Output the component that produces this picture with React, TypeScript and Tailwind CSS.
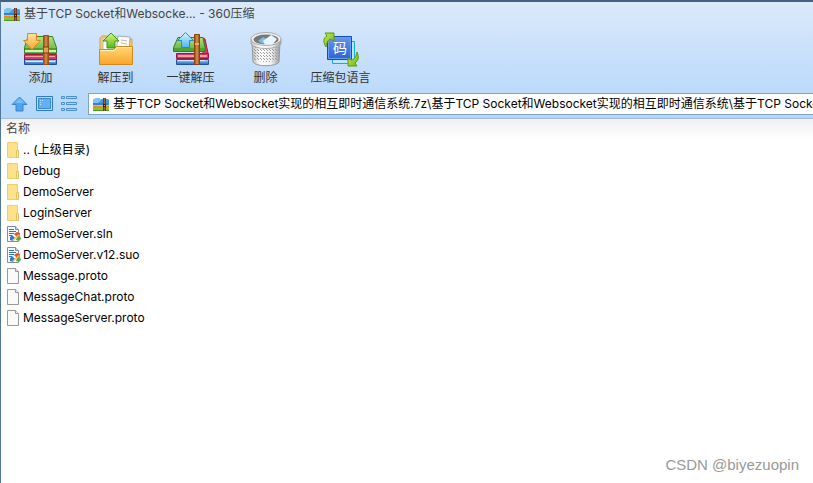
import type { ReactNode } from 'react'

const ARCHIVE_PATH =
  '基于TCP Socket和Websocket实现的相互即时通信系统.7z\\基于TCP Socket和Websocket实现的相互即时通信系统\\基于TCP Socket和Websocket实现的相互即时通信系统'

type FileKind = 'folder' | 'solution' | 'file'

const files: { name: string; kind: FileKind }[] = [
  { name: '.. (上级目录)', kind: 'folder' },
  { name: 'Debug', kind: 'folder' },
  { name: 'DemoServer', kind: 'folder' },
  { name: 'LoginServer', kind: 'folder' },
  { name: 'DemoServer.sln', kind: 'solution' },
  { name: 'DemoServer.v12.suo', kind: 'solution' },
  { name: 'Message.proto', kind: 'file' },
  { name: 'MessageChat.proto', kind: 'file' },
  { name: 'MessageServer.proto', kind: 'file' },
]

function ArchiveIcon() {
  return (
    <svg className="h-4 w-4 shrink-0" viewBox="0 0 16 16" aria-hidden="true">
      <path d="M0 3h2V2h5v1h8l1 1v5H0z" fill="#3f9fe0" />
      <path d="M0 3h2V2h5v1h2L5 7H0z" fill="#7cc6f2" />
      <path d="M0 7h16v2H0z" fill="#2a86d2" />
      <path d="M0 9h16v3H0z" fill="#f08a1d" />
      <path d="M0 9h16v1H0z" fill="#ffb347" />
      <path d="M0 12h16v2H0z" fill="#86c23a" />
      <path d="M0 14h16v1H0z" fill="#4f9a1e" />
      <path d="M10 2h3v13h-3z" fill="#6b3a20" />
      <path d="M11 2h1v13h-1z" fill="#a0623a" />
      <path d="M10 8h3v3h-3z" fill="#42210f" />
      <path d="M11 9h1v1h-1z" fill="#e0a45b" />
    </svg>
  )
}

function BooksIcon({ extract = false }: { extract?: boolean }) {
  return (
    <svg className="h-10 w-10" viewBox="0 0 40 40" aria-hidden="true">
      <defs>
        <linearGradient id="bookGreen" x2="0" y2="1">
          <stop stopColor="#b4e283" />
          <stop offset="1" stopColor="#56ad36" />
        </linearGradient>
        <linearGradient id="bookBlue" x2="0" y2="1">
          <stop stopColor="#a9dcff" />
          <stop offset="1" stopColor="#245fc0" />
        </linearGradient>
        <linearGradient id="strap">
          <stop stopColor="#8b4313" />
          <stop offset=".5" stopColor="#dd944b" />
          <stop offset="1" stopColor="#8b4313" />
        </linearGradient>
        <linearGradient id="arrowGold" x2="0" y2="1">
          <stop stopColor="#ffe3a1" />
          <stop offset="1" stopColor="#ffa62e" />
        </linearGradient>
        <linearGradient id="arrowBlue" x2="0" y2="1">
          <stop stopColor="#d6f7ff" />
          <stop offset="1" stopColor="#4eb1ff" />
        </linearGradient>
      </defs>
      {extract ? (
        <>
          <path d="M5.500 30.500h32v5h-32z" fill="url(#bookBlue)" stroke="#2451a5" />
          <path d="M7 31h27v1H7z" fill="#c7ecff" />
          <path d="M5.500 24.500h32v5h-32z" fill="#cf3f63" stroke="#98173c" />
          <path d="M7 26h29v2H7z" fill="#ee9db0" />
          <path d="m32 9 2 1 3 14-5 1z" fill="#d93e61" stroke="#a91942" />
          <path d="M7 8.500h25l2 10v4H2.500v-4z" fill="url(#bookGreen)" stroke="#327f19" />
          <path d="M3 19h30v3H3z" fill="#4da52a" />
          <path d="M23.500 5.500h5v30h-5z" fill="url(#strap)" stroke="#8a4210" />
          <path d="M24 14h4v2h-4z" fill="#ecaa64" />
          <path d="M14.500 3.500 22.500 11.500h-4v7h-8v-7h-4z" fill="url(#arrowBlue)" stroke="#2389d9" />
        </>
      ) : (
        <>
          <path d="M3.500 30.500h32v5h-32z" fill="url(#bookBlue)" stroke="#254d9f" />
          <path d="M5 32h29v1H5z" fill="#d5eeff" />
          <path d="M3.500 25.500h32v5h-32z" fill="#cf3f68" stroke="#9a183e" />
          <path d="M4 27h30v1H4z" fill="#f3a0b7" />
          <path d="M7 7.500h24.500l4 11v6h-32v-6z" fill="url(#bookGreen)" stroke="#3a8020" />
          <path d="M4 19h31v2H4z" fill="#49a12c" />
          <path d="M4 21h31v2H4z" fill="#d3efbb" />
          <path d="M22.500 6.500h5v29h-5z" fill="url(#strap)" stroke="#9a5218" />
          <path d="M23 18h4v6h-4z" fill="#e0a05c" />
          <path d="M22 18h6M22 24h6" stroke="#7c3a10" />
          <path d="M6.500 4.500h9v7h4l-8.500 9-8.500-9h4z" fill="url(#arrowGold)" stroke="#d98a20" />
        </>
      )}
    </svg>
  )
}

function ExtractToIcon() {
  return (
    <svg className="h-10 w-10" viewBox="0 0 40 40" aria-hidden="true">
      <defs>
        <linearGradient id="folderFront" x2="0" y2="1">
          <stop stopColor="#ffd87b" />
          <stop offset="1" stopColor="#f9a526" />
        </linearGradient>
        <linearGradient id="arrowGreen" x2="0" y2="1">
          <stop stopColor="#d8f884" />
          <stop offset="1" stopColor="#50b819" />
        </linearGradient>
      </defs>
      <path d="M4 34V9l2-2h9l2 3h19v24z" fill="#f1cb76" stroke="#d5a24b" />
      <path d="m7 9 14-2 1 15H7z" fill="#fff" stroke="#b8b8b8" />
      <path d="m22 7 12 1-1 15H20z" fill="#fafafa" stroke="#aaa" />
      <path d="m25 11 6 1m-6 2 6 1" stroke="#bbb" />
      <path d="M3.500 20.500h14l3-3h16v18h-33z" fill="url(#folderFront)" stroke="#d9871b" />
      <path d="M4 21.500h14l3-3h15" fill="none" stroke="#fff0b9" />
      <path d="m15 4 8 8h-4v7h-8v-7H7z" fill="url(#arrowGreen)" stroke="#449317" />
    </svg>
  )
}

function TrashIcon() {
  return (
    <svg className="h-10 w-10" viewBox="0 0 40 40" aria-hidden="true">
      <defs>
        <linearGradient id="basket">
          <stop stopColor="#bbb" />
          <stop offset=".3" stopColor="#fff" />
          <stop offset=".7" stopColor="#eee" />
          <stop offset="1" stopColor="#999" />
        </linearGradient>
        <pattern id="mesh" width="3" height="3" patternUnits="userSpaceOnUse">
          <path d="M0 0h1v1H0zM2 2h1v1H2z" fill="#999" />
        </pattern>
      </defs>
      <path d="M6 13h28l-1 20c-3 5-23 5-26 0z" fill="url(#basket)" stroke="#999" />
      <path d="M7 18h26l-1 12c-3 4-21 4-24 0z" fill="url(#mesh)" />
      <path d="M5 10v5c3 6 27 6 30 0v-5z" fill="url(#basket)" stroke="#aaa" />
      <ellipse cx="20" cy="10" rx="15" ry="6.500" fill="#f3f3f3" stroke="#aaa" />
      <ellipse cx="20" cy="10.500" rx="12.500" ry="5" fill="#777" />
      <path d="m12 12 5-4 4 2-4 5z" fill="#76bde7" />
      <path d="m17 12 8-6 6 4-4 5-8 1z" fill="#e7f5fc" />
    </svg>
  )
}

function LanguageIcon() {
  return (
    <svg className="h-10 w-10" viewBox="0 0 40 40" aria-hidden="true">
      <defs>
        <linearGradient id="pageBlue" x2="0" y2="1">
          <stop stopColor="#6199f2" />
          <stop offset="1" stopColor="#2d62d2" />
        </linearGradient>
        <linearGradient id="turnGreen" x2="1" y2="1">
          <stop stopColor="#c2e84e" />
          <stop offset="1" stopColor="#72b81a" />
        </linearGradient>
      </defs>
      <path d="M11.500 12.500h22v22h-22z" fill="#b7ecff" stroke="#20a5dc" />
      <path d="M6.500 7.500h24v23h-24z" fill="url(#pageBlue)" stroke="#174bb9" />
      <path d="M7.500 8.500h22v21h-22z" fill="none" stroke="#6c9df0" />
      <text x="19" y="24" textAnchor="middle" fill="#fff" fontSize="14" fontFamily="Noto Sans CJK SC, sans-serif">码</text>
      <path d="M5 18C2 13 2 9 6 7L4 4h9v8l-3-2c-4 1-4 4-5 8z" fill="url(#turnGreen)" stroke="#5a980d" />
      <path d="M36 23c2 5 2 8-2 11l2 3h-9v-8l3 2c4-1 5-3 6-8z" fill="url(#turnGreen)" stroke="#5a980d" />
    </svg>
  )
}

function FileIcon({ kind }: { kind: FileKind }) {
  if (kind === 'folder') {
    return (
      <svg className="h-4 w-4 shrink-0" viewBox="0 0 16 16" aria-hidden="true">
        <path d="M1.500.500h10v8h1v7h-11z" fill="#fde28c" stroke="#efce70" />
        <path d="M10.500 8.500h2v7h-2z" fill="#ffeaa8" stroke="#e5c263" />
      </svg>
    )
  }
  if (kind === 'solution') {
    return (
      <svg className="h-4 w-4 shrink-0" viewBox="0 0 16 16" aria-hidden="true">
        <path d="M1.500.500h8l3 3v12h-11z" fill="#f5f9fd" stroke="#7890a8" />
        <path d="M9.500.500v3h3" fill="#c9dbea" stroke="#7890a8" />
        <path d="M3 3.500h5M3 5.500h7M3 7.500h5M3 9.500h3" stroke="#3c72b0" />
        <path d="M4 11.500 6 9l3 3-2 3-3-1z" fill="#2b78d4" />
        <path d="m8 8 3-2 3 1v3l-3 1z" fill="#e5552c" />
        <path d="m11 11 3-1 1 3-2 2-3-1z" fill="#5cab3c" />
        <path d="m6 14 7-6 1 1-7 6z" fill="#f8c440" />
      </svg>
    )
  }
  return (
    <svg className="h-4 w-4 shrink-0" viewBox="0 0 16 16" aria-hidden="true">
      <path d="M1.500.500h8l3 3v12h-11z" fill="#fafafa" stroke="#999" />
      <path d="M9.500.500v3h3" fill="#eee" stroke="#999" />
    </svg>
  )
}

const tools: { label: string; icon: ReactNode }[] = [
  { label: '添加', icon: <BooksIcon /> },
  { label: '解压到', icon: <ExtractToIcon /> },
  { label: '一键解压', icon: <BooksIcon extract /> },
  { label: '删除', icon: <TrashIcon /> },
  { label: '压缩包语言', icon: <LanguageIcon /> },
]

function NavButtons() {
  return (
    <nav className="flex shrink-0 items-center gap-2">
      <button type="button" aria-label="上级目录">
        <svg className="h-4 w-[17px]" viewBox="0 0 17 16">
          <path d="m8.500 1 7.500 7.500h-4V15H5V8.500H1z" fill="#4ba5f0" stroke="#3b85cc" />
          <path d="m8.500 2 5 5h-10z" fill="#72bdf8" />
        </svg>
      </button>
      <button type="button" aria-label="预览">
        <svg className="h-4 w-[17px]" viewBox="0 0 17 16">
          <path d="M.500.500h16v14H.500z" fill="#b4defc" stroke="#3079c4" />
          <path d="M2.500 2.500h12v10h-12z" fill="#64b0f2" stroke="#388bd6" />
          <path d="M4 4.500h1M4 6.500h1M4 8.500h1M6 4.500h1" stroke="#c3e6ff" />
        </svg>
      </button>
      <button type="button" aria-label="列表">
        <svg className="h-4 w-[17px]" viewBox="0 0 17 16" fill="#a5d5f9" stroke="#4b8fd0">
          <path d="M.500.500h3v2h-3zM5.500.500h10v2h-10zM.500 6.500h3v2h-3zM5.500 6.500h10v2h-10zM.500 12.500h3v2h-3zM5.500 12.500h10v2h-10z" />
        </svg>
      </button>
    </nav>
  )
}

export default function App() {
  return (
    <div className="relative flex min-h-screen flex-col overflow-hidden border-t-2 border-l border-t-[#48617f] border-l-[#537798] bg-white font-['Inter','Noto_Sans_CJK_SC',sans-serif] text-xs text-black">
      <header className="border-b border-[#a4bdd5] bg-linear-to-b from-[#dbeafa] via-[#c6dffa] to-[#b3d7fa]">
        <div className="flex h-6 items-center gap-1 pl-[3px] text-[#444]">
          <ArchiveIcon />
          <h1>基于TCP Socket和Websocke... - 360压缩</h1>
        </div>

        <div className="flex h-16 pt-[3px]">
          {tools.map((tool) => (
            <button key={tool.label} type="button" className="flex w-[75px] flex-col items-center gap-px pl-1 text-[#333]">
              {tool.icon}
              <span className="whitespace-nowrap">{tool.label}</span>
            </button>
          ))}
        </div>

        <div className="flex h-7 items-center gap-2.5 pl-2.5">
          <NavButtons />
          <div className="flex h-[22px] min-w-0 flex-1 items-center gap-1 border border-r-0 border-[#7fa4c8] bg-white pl-1">
            <ArchiveIcon />
            <input aria-label="路径" className="min-w-0 flex-1 outline-none" defaultValue={ARCHIVE_PATH} />
          </div>
        </div>
      </header>

      <main className="flex-1 bg-linear-to-b from-[#f0f0f0] to-white to-[20px]">
        <table className="w-full text-left">
          <thead>
            <tr className="h-5">
              <th className="p-0 pl-[5px] font-normal text-[#444]">名称</th>
            </tr>
          </thead>
          <tbody>
            {files.map((file) => (
              <tr key={file.name} className="h-[21px]">
                <td className="p-0 pl-[5px]">
                  <div className="flex items-center gap-px">
                    <FileIcon kind={file.kind} />
                    <span>{file.name}</span>
                  </div>
                </td>
              </tr>
            ))}
          </tbody>
        </table>
      </main>

      <p className="absolute right-3.5 bottom-2 font-['Liberation_Sans',sans-serif] text-[15px] text-[#999]">CSDN @biyezuopin</p>
    </div>
  )
}
